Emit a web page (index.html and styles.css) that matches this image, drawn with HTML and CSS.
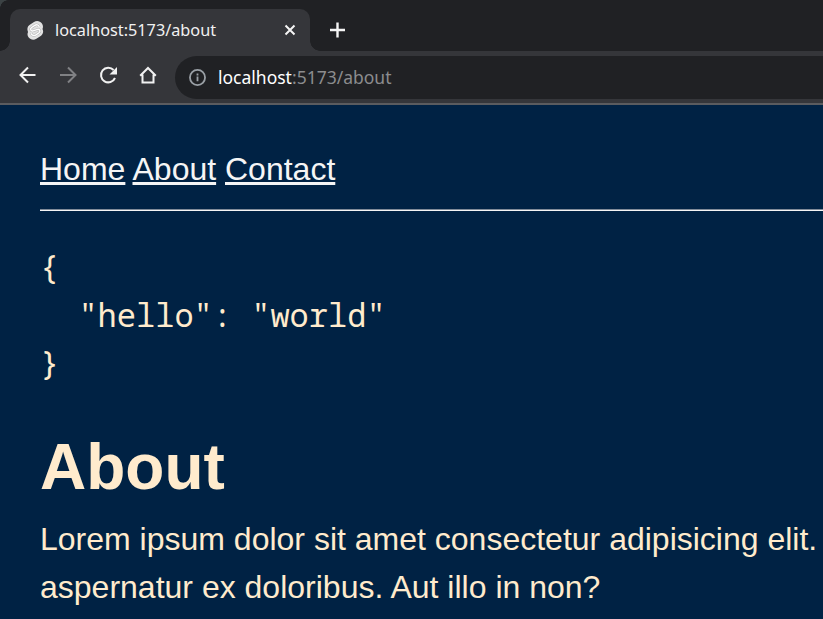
FILE: index.html
```html
<!DOCTYPE html>
<html lang="en">
<head>
<meta charset="utf-8">
<title>About</title>
<link rel="stylesheet" href="styles.css">
</head>
<body>
<header class="browser">
  <div class="tabs">
    <div class="tab">
      <svg class="favicon" viewBox="0 0 18 20"><path d="M15.800 2.700C14-.1 10.200-.8 7.400 1L3 4C1.600 4.900.7 6.200.5 7.800c-.2 1.300 0 2.600.6 3.700-.9 1.800-.8 3.900.5 5.600 2 2.700 5.400 3.500 8.300 1.700l4.600-3c1.400-.9 2.300-2.300 2.500-3.900.2-1.200 0-2.400-.6-3.500.9-1.900.6-4-.6-5.700z" fill="#e2e2e2"/><path d="M13 6.300C12.300 3.800 9.900 3.500 8.200 4.600L4.900 6.800c-2.100 1.500-.7 4.400 1.600 3.600l4.700-1.600c2.300-.5 3.500 2.100 1.500 3.600l-3.200 2.200c-2 1.300-4.500.8-5-1.600" fill="none" stroke="#b5b5b5" stroke-width="2.600"/><path d="M13 6.300C12.300 3.800 9.900 3.500 8.200 4.600L4.900 6.800c-2.100 1.500-.7 4.400 1.600 3.600l4.700-1.600c2.300-.5 3.500 2.100 1.500 3.600l-3.200 2.200c-2 1.300-4.500.8-5-1.600" fill="none" stroke="#fff" stroke-width="1.500"/></svg>
      <span class="title">localhost:5173/about</span>
      <svg class="close" viewBox="0 0 12 12"><path d="M1.500 1.500l9 9m0-9l-9 9"/></svg>
    </div>
    <svg class="plus" viewBox="0 0 16 16"><path d="M8.500 .5v15M1 8h15"/></svg>
  </div>
  <div class="toolbar">
    <svg class="nav" viewBox="0 0 24 24"><path d="M19.500 12H5M12 4.500L4.500 12l7.500 7.500"/></svg>
    <svg class="nav dim" viewBox="0 0 24 24"><path d="M4 12h15M12 4.500l7.500 7.500-7.500 7.500"/></svg>
    <svg class="nav" viewBox="0 0 24 24"><path d="M19 15A7.300 7.300 0 1 1 17.600 7"/><path class="solid" d="M21 4v7.500h-7.500z"/></svg>
    <svg class="nav" viewBox="0 0 24 24"><path d="M4.200 12.700L12 5l7.800 7.700M6.500 11.500v8h11v-8"/></svg>
    <div class="address">
      <svg class="info" viewBox="0 0 16 16"><circle cx="8" cy="8" r="7.100"/><path d="M8 7v4.500M8 4.300v1.700"/></svg>
      <span class="url"><b>localhost</b>:5173/about</span>
    </div>
  </div>
</header>
<main>
  <nav><a href="#">Home</a> <a href="#">About</a> <a href="#">Contact</a></nav>
  <hr>
  <pre>{
  "hello": "world"
}</pre>
  <h1>About</h1>
  <p>Lorem ipsum dolor sit amet consectetur adipisicing elit.<br>aspernatur ex doloribus. Aut illo in non?</p>
</main>
</body>
</html>
```
FILE: styles.css
```css
* { box-sizing: border-box; }
body { margin: 0; width: 823px; height: 619px; overflow: hidden; background: #002244; color: #ffebcd; font: 32px/48px "Liberation Sans", sans-serif; }
.browser { height: 105px; background: #35363a; border-bottom: 2px solid #5b5c5f; font-family: "Noto Sans", sans-serif; }
.tabs { height: 51px; background: radial-gradient(circle at 8px 8px, #202124 7.500px, #3b4244 8px) 0 0 / 8px 8px no-repeat, linear-gradient(#202124, #202124) 8px 0 no-repeat, linear-gradient(#202124, #202124) 0 8px no-repeat; display: flex; padding: 9px 0 0 10px; }
.tab { position: relative; width: 300px; height: 42px; background: #35363a; border-radius: 10px 10px 0 0; display: flex; align-items: center; padding: 0 14px 0 17px; }
.tab::before, .tab::after { content: ""; position: absolute; bottom: 0; width: 10px; height: 10px; }
.tab::before { left: -10px; background: radial-gradient(circle at 0 0, transparent 9.500px, #35363a 10px); }
.tab::after { right: -10px; background: radial-gradient(circle at 100% 0, transparent 9.500px, #35363a 10px); }
.favicon { width: 17px; height: 19px; margin-right: 11px; }
.title { flex: 1; font-size: 16.250px; line-height: 24px; color: #f1f1f1; }
.close { width: 12px; height: 12px; }
.plus { width: 16px; height: 16px; margin: 13px 0 0 19px; }
.close path, .plus path { stroke: #f5f5f5; stroke-width: 2; }
.plus path { stroke-width: 2.400; }
.toolbar { height: 52px; display: flex; align-items: center; padding-left: 15.500px; }
.nav { width: 24px; height: 24px; margin-right: 16px; margin-top: -4px; flex: none; fill: none; stroke: #f1f1f1; stroke-width: 2; }
.nav.dim { stroke: #808184; }
.nav .solid { fill: #f1f1f1; stroke: none; }
.address { flex: 1; height: 43px; margin-left: -.5px; background: #202124; border-radius: 22px 0 0 22px; display: flex; align-items: center; padding-left: 14px; }
.info { width: 17px; height: 17px; margin-right: 12px; fill: none; stroke: #9aa0a6; stroke-width: 1.700; }
.url { font-size: 17.500px; line-height: 24px; margin-top: -1px; color: #8b8c8e; }
.url b { font-weight: 400; color: #fff; }
main { padding: 40px 0 0 40px; white-space: nowrap; }
nav { height: 64px; }
hr { height: 2px; margin: 0; border: 0; border-top: 1px solid #808b99; background: #f5f5f5; }
a { color: #f5f5f5; }
pre { margin: 32px 0 0; font: 32px/48px "Noto Sans Mono", "DejaVu Sans Mono", monospace; }
h1 { margin: 40px 0 0; font-size: 64px; line-height: 80px; }
p { margin: 8px 0 0; }
```
